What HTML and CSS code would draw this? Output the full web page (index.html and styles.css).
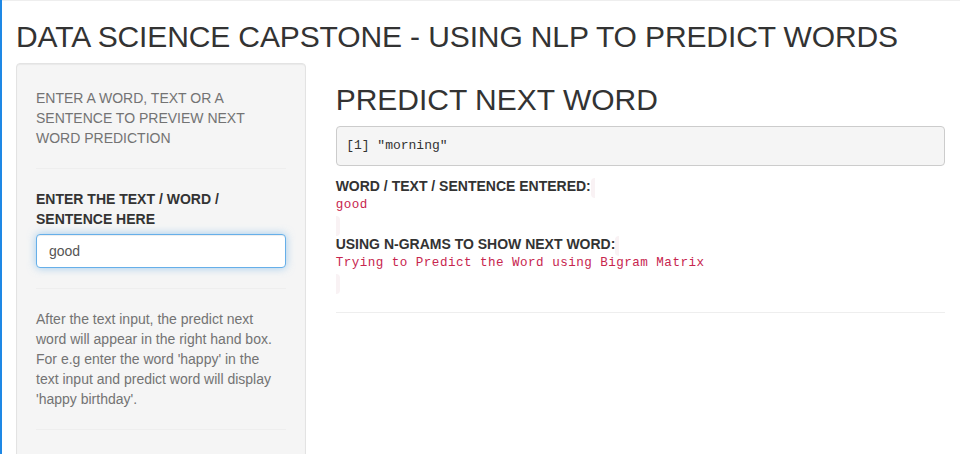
FILE: index.html
```html
<!DOCTYPE html>
<html>
<head>
<meta charset="utf-8">
<title>Data Science Capstone</title>
<link rel="stylesheet" href="styles.css">
</head>
<body>
<div class="frame">
  <div class="container">
    <h2 class="title">DATA SCIENCE CAPSTONE - USING NLP TO PREDICT WORDS</h2>
    <div class="row">
      <div class="col-side">
        <div class="well">
          <span class="help-block">ENTER A WORD, TEXT OR A SENTENCE TO PREVIEW NEXT WORD PREDICTION</span>
          <hr>
          <div class="form-group">
            <label class="control-label" for="text">ENTER THE TEXT / WORD / SENTENCE HERE</label>
            <input id="text" class="form-control" type="text" value="good">
          </div>
          <hr>
          <span class="help-block">After the text input, the predict next word will appear in the right hand box. For e.g enter the word 'happy' in the text input and predict word will display 'happy birthday'.</span>
          <hr>
        </div>
      </div>
      <div class="col-main">
        <h2 class="main-title">PREDICT NEXT WORD</h2>
        <pre class="output">[1] "morning"</pre>
        <strong>WORD / TEXT / SENTENCE ENTERED:</strong><code class="out"><div class="text-output">good</div></code>
        <br>
        <strong>USING N-GRAMS TO SHOW NEXT WORD:</strong><code class="out"><div class="text-output">Trying to Predict the Word using Bigram Matrix</div></code>
        <hr>
      </div>
    </div>
  </div>
</div>
</body>
</html>
```

FILE: styles.css
```css
* { box-sizing: border-box; }
html, body { margin: 0; padding: 0; background: #fff; }
body {
  font-family: "Liberation Sans", Arial, sans-serif;
  font-size: 14px;
  line-height: 1.42857143;
  color: #333;
}
.frame {
  height: 454px;
  overflow: hidden;
  border-left: 2px solid #1e88e5;
  box-shadow: inset 0 1px 0 #eeeeee;
}
.container {
  padding: 0 15px 0 14px;
}
h2 {
  font-family: "Liberation Sans", Arial, sans-serif;
  font-size: 30px;
  font-weight: 500;
  line-height: 1.1;
  color: #333;
  margin: 20px 0 10px;
}
.title {
  letter-spacing: -0.12px;
}
.row {
  display: flex;
  margin: 0 -15px;
}
.col-side {
  width: 33.3333%;
  padding: 0 15px;
}
.col-main {
  width: 66.6667%;
  padding: 0 15px;
}
.well {
  min-height: 20px;
  padding: 19px;
  margin-bottom: 20px;
  background-color: #f5f5f5;
  border: 1px solid #e3e3e3;
  border-radius: 4px;
  box-shadow: inset 0 1px 1px rgba(0,0,0,.05);
  height: 520px;
}
.help-block {
  display: block;
  margin-top: 5px;
  margin-bottom: 10px;
  color: #737373;
}
hr {
  margin: 20px 0;
  border: 0;
  border-top: 1px solid #eee;
  height: 0;
}
.form-group { margin-bottom: 15px; }
.control-label {
  display: inline-block;
  max-width: 100%;
  margin-bottom: 5px;
  font-weight: bold;
}
.form-control {
  display: block;
  width: 100%;
  height: 34px;
  padding: 6px 12px;
  font-family: "Liberation Sans", Arial, sans-serif;
  font-size: 14px;
  line-height: 1.42857143;
  color: #555;
  background-color: #fff;
  border: 1px solid #66afe9;
  border-radius: 4px;
  outline: 0;
  box-shadow: inset 0 1px 1px rgba(0,0,0,.075), 0 0 8px rgba(102,175,233,.6);
}
.output {
  display: block;
  padding: 9.5px;
  margin: 0 0 10px;
  font-family: "Liberation Mono", "Courier New", monospace;
  font-size: 13px;
  line-height: 1.42857143;
  color: #333;
  background-color: #f5f5f5;
  border: 1px solid #ccc;
  border-radius: 4px;
  white-space: pre;
}
.out {
  padding: 3px 4px;
  font-family: "Liberation Mono", "Courier New", monospace;
  font-size: 12.6px;
  line-height: 1;
  letter-spacing: 0.46px;
  color: #c7254e;
  background-color: #f9f2f4;
  border-radius: 4px;
}
.text-output {
  line-height: 18px;
  background: transparent;
}
```
